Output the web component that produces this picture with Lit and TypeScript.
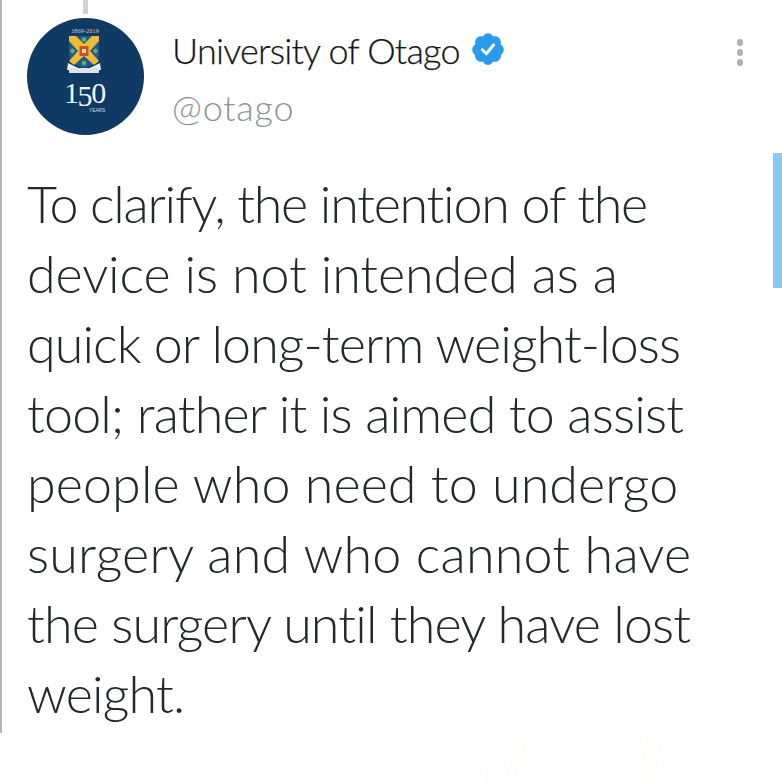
import { LitElement, html, css } from "lit";
import { customElement } from "lit/decorators.js";

const LINES: [string, number][] = [
  ["To clarify, the intention of the", -1.25],
  ["device is not intended as a", -0.1],
  ["quick or long-term weight-loss", -0.9],
  ["tool; rather it is aimed to assist", -0.8],
  ["people who need to undergo", 0.1],
  ["surgery and who cannot have", 0.2],
  ["the surgery until they have lost", -0.85],
  ["weight.", -0.8],
];

@customElement("app-root")
export class AppRoot extends LitElement {
  static styles = css`
    :host { display: block; width: 782px; height: 782px; background: #fff; overflow: hidden; position: relative; font-family: "Lato", "Liberation Sans", sans-serif; }
    .thread { position: absolute; left: 0; top: 0; width: 2px; height: 733px; background: #b4b4b6; }
    .stub { position: absolute; left: 83px; top: 0; width: 5px; height: 14px; background: #cfd2d6; }
    .scroll { position: absolute; left: 773px; top: 153px; width: 9px; height: 135px; background: #8bc8f3; }
    .fade { position: absolute; left: 480px; top: 734px; width: 190px; height: 48px; }
    .page { display: flex; flex-direction: column; padding: 18px 0 0 27px; }
    .head { display: flex; align-items: flex-start; }
    .avatar { width: 117px; height: 117px; flex: none; display: block; }
    .names { margin-left: 28px; display: flex; flex-direction: column; }
    .name-row { display: flex; align-items: center; height: 40px; margin-top: 12px; }
    .name { font-size: 36px; font-weight: 300; color: #14181c; letter-spacing: -0.78px; line-height: 40px; white-space: nowrap; -webkit-text-stroke: 0.25px #14181c; }
    .badge { width: 36px; height: 36px; margin-left: 10px; margin-top: -3px; flex: none; }
    .handle { font-size: 36px; font-weight: 300; color: #8a949c; line-height: 40px; margin-top: 17px; letter-spacing: 0.8px; }
    .menu { margin-left: auto; margin-right: 39px; margin-top: 21px; display: flex; flex-direction: column; gap: 3.5px; }
    .menu i { width: 6.5px; height: 6.5px; border-radius: 50%; background: #aeb0b3; display: block; }
    .body { margin-top: 33px; font-size: 52px; font-weight: 300; line-height: 70px; color: #25292d; }
    .body div { white-space: nowrap; }
  `;

  render() {
    return html`
      <div class="thread"></div>
      <div class="stub"></div>
      <div class="scroll"></div>
      <svg class="fade" viewBox="0 0 190 48">
        <path d="M2 46 L12 20 L14 46Z M24 44 L40 2 L50 2 L36 46Z M156 46 L166 2 L184 2 L176 46Z" fill="#fdfdfb"/>
      </svg>
      <div class="page">
        <div class="head">
          <svg class="avatar" viewBox="0 0 117 117">
            <circle cx="58.5" cy="58.5" r="58.5" fill="#0f3a63"/>
            <text x="58" y="14.5" text-anchor="middle" font-size="6.4" fill="#c9d2da" font-family="Liberation Serif, serif">1869-2019</text>
            <path d="M42 18 H72 V36 Q72 46 57 50 Q42 46 42 36Z" fill="#1d5a93"/>
            <path d="M42 18 H49 L57 26 L65 18 H72 V23 L63 33 L72 43 L67 47 L57 38 L47 47 L42 43 L51 33 L42 23Z" fill="#efbb32"/>
            <rect x="52.5" y="28" width="9" height="10" fill="#c8502a"/>
            <rect x="55" y="31" width="4" height="4" fill="#e8d9b0"/>
            <circle cx="57" cy="21.5" r="2.2" fill="#6fae5a"/>
            <circle cx="45.5" cy="33" r="2.2" fill="#6fae5a"/>
            <circle cx="68.5" cy="33" r="2.2" fill="#6fae5a"/>
            <circle cx="57" cy="45" r="2.2" fill="#6fae5a"/>
            <path d="M41 45 L47 48 Q57 54 67 48 L73 45 L74 52 H40Z" fill="#eef0f2"/>
            <rect x="42" y="50" width="30" height="5" fill="#dfe3e7"/>
            <text x="37" y="85" font-size="30" fill="#f1f3f5" font-family="Liberation Serif, serif" letter-spacing="-1.4">1<tspan dy="3">5</tspan><tspan dy="-3">0</tspan></text>
            <text x="62" y="93.5" font-size="4.8" fill="#d8dde3" font-family="Liberation Sans, sans-serif">YEARS</text>
          </svg>
          <div class="names">
            <div class="name-row">
              <span class="name">University of Otago</span>
              <svg class="badge" viewBox="0 0 24 24">
                <path fill="#2a9bee" d="M22.5 12.5c0-1.58-.875-2.95-2.148-3.6.154-.435.238-.905.238-1.4 0-2.21-1.71-3.998-3.818-3.998-.47 0-.92.084-1.336.25C14.818 2.415 13.51 1.5 12 1.5s-2.816.917-3.437 2.25c-.415-.165-.866-.25-1.336-.25-2.11 0-3.818 1.79-3.818 4 0 .494.083.964.237 1.4-1.272.65-2.147 2.018-2.147 3.6 0 1.495.782 2.798 1.942 3.486-.02.17-.032.34-.032.514 0 2.21 1.708 4 3.818 4 .47 0 .92-.086 1.335-.25.62 1.334 1.926 2.25 3.437 2.25 1.512 0 2.818-.916 3.437-2.25.415.163.865.248 1.336.248 2.11 0 3.818-1.79 3.818-4 0-.174-.012-.344-.033-.513 1.158-.687 1.943-1.99 1.943-3.484z"/>
                <path fill="none" stroke="#fff" stroke-width="2" stroke-linecap="round" stroke-linejoin="round" d="M8.3 12.6l2.6 2.6 4.9-6"/>
              </svg>
            </div>
            <div class="handle">@otago</div>
          </div>
          <div class="menu"><i></i><i></i><i></i></div>
        </div>
        <div class="body">${LINES.map(([text, spacing]) => html`<div style="letter-spacing:${spacing}px">${text}</div>`)}</div>
      </div>
    `;
  }
}
